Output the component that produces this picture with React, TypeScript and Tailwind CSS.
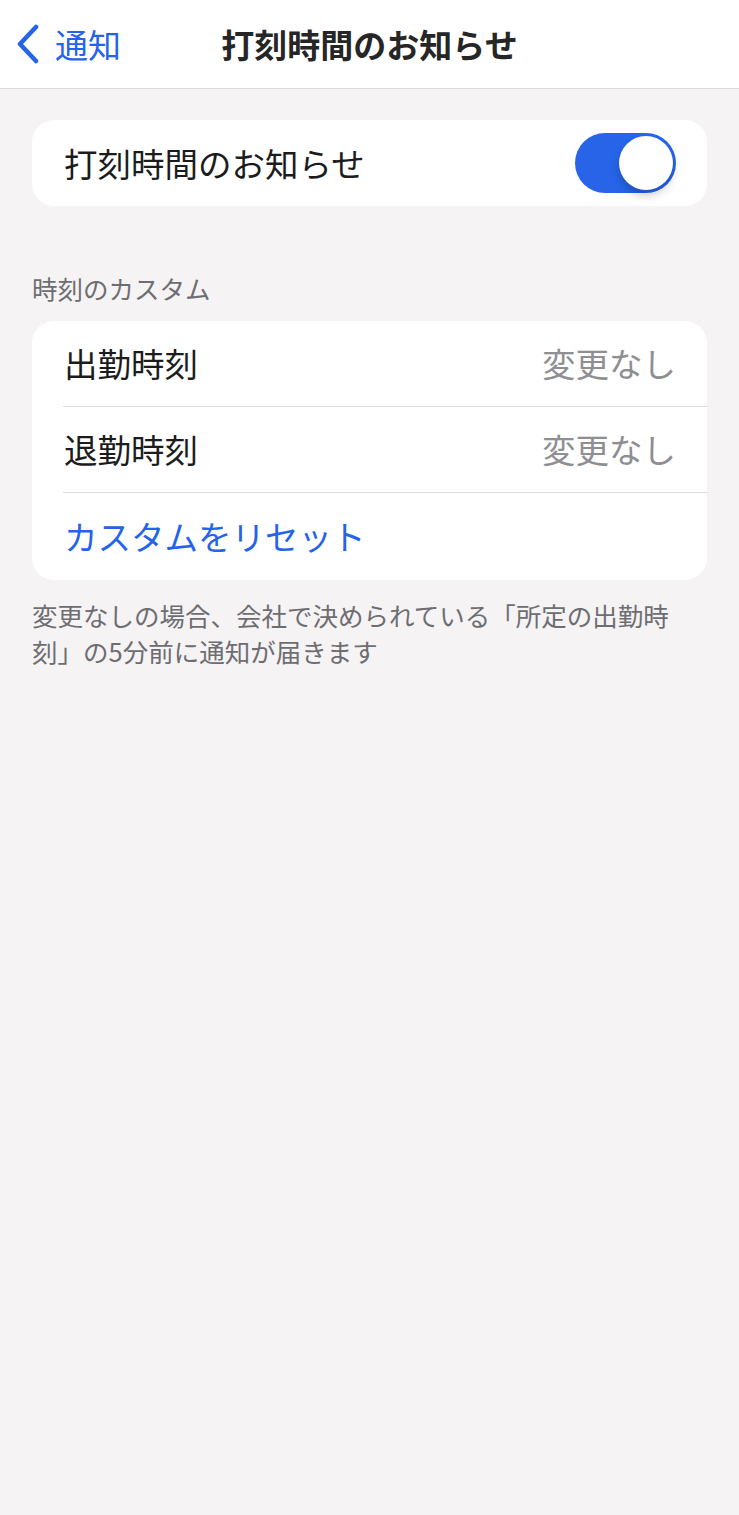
import { useState } from 'react';

const FONT = { fontFamily: '"Noto Sans CJK JP", "Noto Sans", sans-serif' };

const Toggle = ({ on, onChange }: { on: boolean; onChange: (v: boolean) => void }) => (
  <button
    onClick={() => onChange(!on)}
    className={`relative flex h-[60px] w-[101px] items-center rounded-full p-[3px] ${on ? 'justify-end bg-[#2764e8]' : 'justify-start bg-[#e5e5ea]'}`}
  >
    <span className="h-[54px] w-[54px] rounded-full bg-white shadow-[0_6px_8px_rgba(0,0,0,0.18)]" />
  </button>
);

const TimeRow = ({ label, value, last }: { label: string; value: string; last?: boolean }) => (
  <div className="pl-[31px]">
    <div className={`flex h-[86px] items-center justify-between pr-[31px] ${last ? '' : 'border-b border-[#dcdcdf]'}`}>
      <span className="pl-[1px] text-[33.5px] text-[#1c1c1e]">{label}</span>
      <span className="text-[33.5px] text-[#8e8e93]">{value}</span>
    </div>
  </div>
);

export default function App() {
  const [enabled, setEnabled] = useState(true);

  return (
    <div className="min-h-[1515px] w-full bg-[#f5f3f4]" style={FONT}>
      {/* Navigation bar */}
      <header className="grid h-[89px] grid-cols-[1fr_auto_1fr] items-center border-b border-[#dadada] bg-white">
        <button className="flex items-center gap-[14px] pl-[15px] text-[#2563eb]">
          <svg width="26" height="40" viewBox="0 0 26 40" fill="none">
            <path d="M21 3 L5 20 L21 37" stroke="currentColor" strokeWidth="4.5" strokeLinecap="round" strokeLinejoin="round" />
          </svg>
          <span className="text-[33px] leading-none">通知</span>
        </button>
        <h1 className="text-[33px] font-bold leading-none text-[#262626]">打刻時間のお知らせ</h1>
        <div />
      </header>

      <main className="px-[32px]">
        {/* Main toggle */}
        <div className="mt-[31px] flex h-[86px] items-center justify-between rounded-[22px] bg-white pl-[32px] pr-[31px]">
          <span className="text-[33.5px] text-[#1c1c1e]">打刻時間のお知らせ</span>
          <Toggle on={enabled} onChange={setEnabled} />
        </div>

        {/* Custom time section */}
        <div className="mt-[64px] mb-[15px] h-[36px] text-[25.5px] leading-[36px] text-[#6d6d72]">時刻のカスタム</div>
        <div className="overflow-hidden rounded-[22px] bg-white">
          <TimeRow label="出勤時刻" value="変更なし" />
          <TimeRow label="退勤時刻" value="変更なし" />
          <div className="pl-[32px]">
            <div className="flex h-[87px] items-center">
              <button className="text-[33.5px] text-[#2563eb]">カスタムをリセット</button>
            </div>
          </div>
        </div>
        <p className="mt-[17px] pr-[16px] text-[25.5px] leading-[36px] text-[#6d6d72]">
          変更なしの場合、会社で決められている「所定の出勤時刻」の5分前に通知が届きます
        </p>
      </main>
    </div>
  );
}
